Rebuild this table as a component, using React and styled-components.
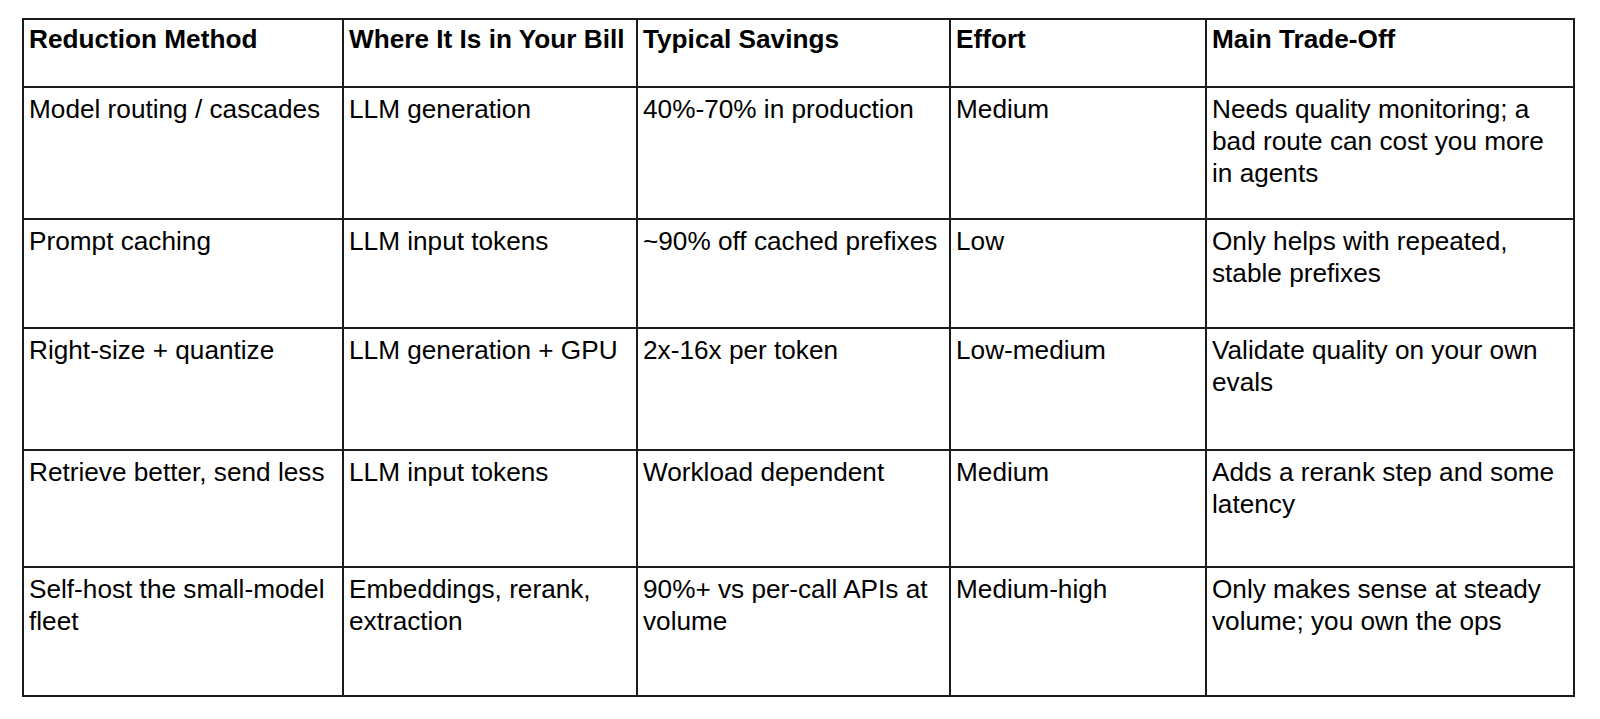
import React from 'react'
import styled, { createGlobalStyle } from 'styled-components'

const COLUMNS = [
    { title: 'Reduction Method', width: 320 },
    { title: 'Where It Is in Your Bill', width: 294 },
    { title: 'Typical Savings', width: 313 },
    { title: 'Effort', width: 256 },
    { title: 'Main Trade-Off', width: 368 },
]

const ROWS = [
    {
        height: 132,
        cells: ['Model routing / cascades', 'LLM generation', '40%-70% in production', 'Medium',
            'Needs quality monitoring; a bad route can cost you more in agents'],
    },
    {
        height: 109,
        cells: ['Prompt caching', 'LLM input tokens', '~90% off cached prefixes', 'Low',
            'Only helps with repeated, stable prefixes'],
    },
    {
        height: 122,
        cells: ['Right-size + quantize', 'LLM generation + GPU', '2x-16x per token', 'Low-medium',
            'Validate quality on your own evals'],
    },
    {
        height: 117,
        cells: ['Retrieve better, send less', 'LLM input tokens', 'Workload dependent', 'Medium',
            'Adds a rerank step and some latency'],
    },
    {
        height: 129,
        cells: ['Self-host the small-model fleet', 'Embeddings, rerank, extraction', '90%+ vs per-call APIs at volume',
            'Medium-high', 'Only makes sense at steady volume; you own the ops'],
    },
]

const App = () => {
    return (
        <>
            <GlobalStyle />
            <Page>
                <Table>
                    <colgroup>
                        {COLUMNS.map(col => <Col key={col.title} $width={col.width} />)}
                    </colgroup>
                    <thead>
                        <Row $height={68}>
                            {COLUMNS.map(col => <HeadCell key={col.title}>{col.title}</HeadCell>)}
                        </Row>
                    </thead>
                    <tbody>
                        {ROWS.map(row => (
                            <Row key={row.cells[0]} $height={row.height}>
                                {row.cells.map((text, id) => <Cell key={id}>{text}</Cell>)}
                            </Row>
                        ))}
                    </tbody>
                </Table>
            </Page>
        </>
    )
}

export default App

const GlobalStyle = createGlobalStyle`
    html, body {
        margin: 0;
        background: #ffffff;
    }
    body {
        font-family: "Liberation Sans", Arial, sans-serif;
        color: #000000;
    }
`
const Page = styled.div`
    width: 1600px;
    height: 719px;
    padding: 18px 0 0 22px;
    box-sizing: border-box;
`
const Table = styled.table`
    border-collapse: collapse;
    table-layout: fixed;
    width: 1553px;
    font-size: 26.2px;
    line-height: 32px;
`
const Col = styled.col`
    width: ${p => p.$width}px;
`
const Row = styled.tr`
    height: ${p => p.$height}px;
`
const Cell = styled.td`
    border: 2px solid #1c1c1c;
    padding: 5px;
    vertical-align: top;
    text-align: left;
    font-weight: normal;
`
const HeadCell = styled(Cell).attrs({ as: 'th' })`
    padding-top: 3px;
    font-weight: bold;
`
